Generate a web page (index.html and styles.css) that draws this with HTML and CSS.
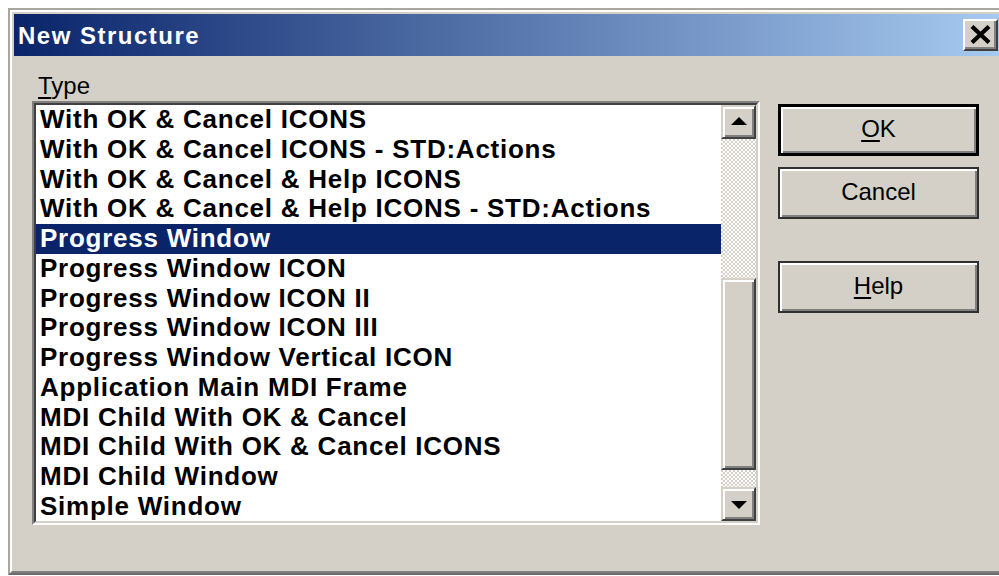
FILE: index.html
```html
<!DOCTYPE html>
<html>
<head>
<meta charset="utf-8">
<title>New Structure</title>
<link rel="stylesheet" href="styles.css">
</head>
<body>
<div class="window">
  <div class="frame">
    <div class="titlebar">
      <span class="title">New Structure</span>
      <button class="close" type="button" aria-label="Close">
        <svg width="21" height="19" viewBox="0 0 21 19"><path d="M2 1.5 L19 17.5 M19 1.5 L2 17.5" stroke="#000" stroke-width="4.2" fill="none"/></svg>
      </button>
    </div>
    <div class="content">
      <div class="left">
        <label class="label"><u>T</u>ype</label>
        <div class="listbox">
          <ul class="items">
            <li>With OK &amp; Cancel ICONS</li>
            <li>With OK &amp; Cancel ICONS - STD:Actions</li>
            <li>With OK &amp; Cancel &amp; Help ICONS</li>
            <li>With OK &amp; Cancel &amp; Help ICONS - STD:Actions</li>
            <li class="selected">Progress Window</li>
            <li>Progress Window ICON</li>
            <li>Progress Window ICON II</li>
            <li>Progress Window ICON III</li>
            <li>Progress Window Vertical ICON</li>
            <li>Application Main MDI Frame</li>
            <li>MDI Child With OK &amp; Cancel</li>
            <li>MDI Child With OK &amp; Cancel ICONS</li>
            <li>MDI Child Window</li>
            <li>Simple Window</li>
          </ul>
          <div class="scrollbar">
            <div class="sb-btn"><span class="arrow up"></span></div>
            <div class="track track-top"></div>
            <div class="thumb"></div>
            <div class="track track-bottom"></div>
            <div class="sb-btn"><span class="arrow down"></span></div>
          </div>
        </div>
      </div>
      <div class="buttons">
        <button class="btn default" type="button"><u>O</u>K</button>
        <button class="btn" type="button">Cancel</button>
        <button class="btn help" type="button"><u>H</u>elp</button>
      </div>
    </div>
  </div>
</div>
</body>
</html>
```

FILE: styles.css
```css
html, body {
  margin: 0;
  padding: 0;
  overflow: hidden;
  background: #ffffff;
}

body {
  width: 999px;
  height: 576px;
  padding: 8px 0 0 8px;
  box-sizing: border-box;
  font-family: "Liberation Sans", Arial, sans-serif;
}

.window {
  width: 1000px;
  height: 567px;
  box-sizing: border-box;
  border: 2px solid;
  border-color: #a9a6a0 #404040 #6c6c6c #a9a6a0;
  background: #d4d0c8;
}

.frame {
  height: 100%;
  box-sizing: border-box;
  border: 2px solid;
  border-color: #ffffff #808080 #808080 #ffffff;
  padding: 2px;
  display: flex;
  flex-direction: column;
}

/* caption */
.titlebar {
  height: 42px;
  flex: none;
  display: flex;
  align-items: center;
  justify-content: space-between;
  padding-left: 4px;
  background: linear-gradient(to right, #0a246a, #a6caf0);
}

.title {
  color: #ffffff;
  font-weight: bold;
  font-size: 24px;
  letter-spacing: 1.5px;
  padding-top: 1px;
}

.close {
  width: 35px;
  height: 32px;
  margin-right: 4px;
  padding: 0;
  box-sizing: border-box;
  background: #d4d0c8;
  border: 2px solid;
  border-color: #ffffff #404040 #404040 #ffffff;
  box-shadow: inset -2px -2px 0 #808080;
  display: flex;
  align-items: center;
  justify-content: center;
}

.close svg {
  display: block;
  margin: 0 1px 2px 0;
}

/* dialog body */
.content {
  flex: 1;
  display: flex;
  padding: 17px 0 0 18px;
  gap: 18px;
}

.left {
  display: flex;
  flex-direction: column;
  gap: 2px;
}

.label {
  display: block;
  font-size: 24px;
  line-height: 26px;
  height: 26px;
  padding-left: 6px;
  color: #000;
}

.listbox {
  width: 728px;
  height: 424px;
  box-sizing: border-box;
  border: 2px solid;
  border-color: #808080 #ffffff #ffffff #808080;
  background: #ffffff;
  display: flex;
  position: relative;
}

.listbox::before {
  content: "";
  position: absolute;
  inset: 0;
  border: 2px solid;
  border-color: #404040 #d4d0c8 #d4d0c8 #404040;
  pointer-events: none;
}

.items {
  list-style: none;
  margin: 2px 0 2px 2px;
  padding: 0;
  flex: 1;
  overflow: hidden;
}

.items li {
  height: 29.77px;
  line-height: 29.77px;
  padding-left: 4px;
  font-size: 26px;
  font-weight: bold;
  letter-spacing: 0.75px;
  color: #000;
  white-space: nowrap;
}

.items li.selected {
  background: #0a246a;
  color: #ffffff;
}

/* vertical scroll bar */
.scrollbar {
  width: 35px;
  margin: 2px 2px 2px 0;
  display: flex;
  flex-direction: column;
}

.sb-btn, .thumb {
  box-sizing: border-box;
  background: #d4d0c8;
  border: 2px solid;
  border-color: #d4d0c8 #404040 #404040 #d4d0c8;
  box-shadow: inset 2px 2px 0 #ffffff, inset -2px -2px 0 #808080;
}

.sb-btn {
  height: 34px;
  flex: none;
  display: flex;
  align-items: center;
  justify-content: center;
}

.arrow {
  width: 0;
  height: 0;
  border-left: 8px solid transparent;
  border-right: 8px solid transparent;
}

.arrow.up {
  border-bottom: 8px solid #000;
  margin-bottom: 2px;
}

.arrow.down {
  border-top: 8px solid #000;
  margin-top: 1px;
}

.track {
  background: repeating-conic-gradient(#ffffff 0 25%, #d4d0c8 0 50%) 0 0 / 4px 4px;
}

.track-top {
  height: 139px;
  flex: none;
}

.thumb {
  height: 192px;
  flex: none;
}

.track-bottom {
  flex: 1;
}

/* command buttons */
.buttons {
  display: flex;
  flex-direction: column;
  padding-top: 31px;
}

.btn {
  width: 201px;
  height: 52px;
  box-sizing: border-box;
  background: #d4d0c8;
  border: 2px solid #303030;
  box-shadow: inset 2px 2px 0 #ffffff, inset -2px -2px 0 #808080;
  font-family: "Liberation Sans", Arial, sans-serif;
  font-size: 24px;
  color: #000;
  padding: 0 0 2px 0;
}

.btn + .btn {
  margin-top: 11px;
}

.btn.default {
  border: 3px solid #000;
}

.btn.help {
  margin-top: 42px;
}

u {
  text-decoration-thickness: 2px;
  text-underline-offset: 3px;
}
```
